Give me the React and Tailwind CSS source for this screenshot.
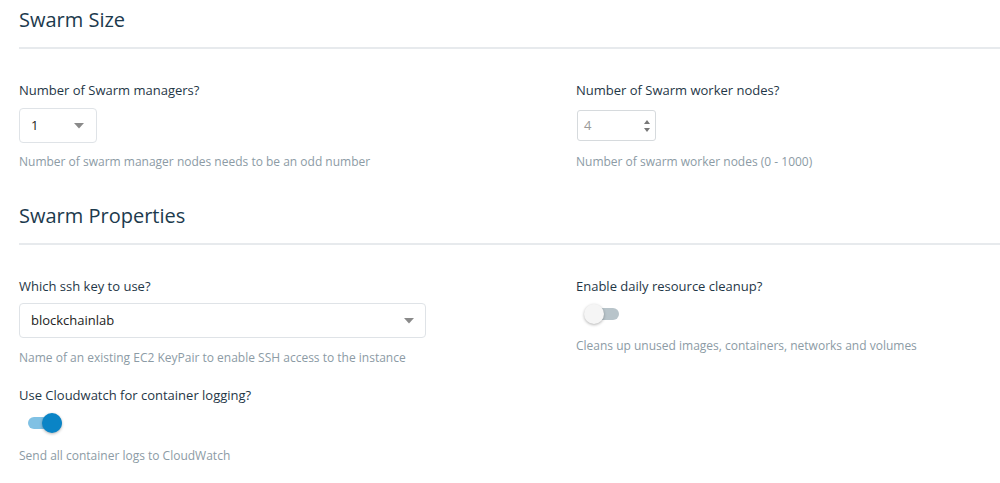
import React from "react";

const font = { fontFamily: '"Open Sans", "Liberation Sans", sans-serif' };

const Caret = () => (
  <svg width="10" height="6" viewBox="0 0 10 6" className="shrink-0">
    <path d="M0 0 H10 L5 5.5 Z" fill="#8a8a8a" />
  </svg>
);

const Toggle = ({ on }) => (
  <div className="relative ml-[8px] h-[20px] w-[35px]">
    <div
      className={`absolute left-[1px] top-[4px] h-[12px] w-[34px] rounded-full ${
        on ? "bg-[#80c1e4]" : "bg-[#b8c4ca]"
      }`}
    />
    <div
      className={`absolute top-0 h-[20px] w-[20px] rounded-full shadow-[0_1px_3px_rgba(0,0,0,0.3)] ${
        on ? "left-[15px] bg-[#0a84c6]" : "left-0 bg-[#f5f5f5]"
      }`}
    />
  </div>
);

const Heading = ({ children }) => (
  <div>
    <h2 className="pl-[19px] text-[20px] leading-[28px] text-[#1c3a4d]">
      {children}
    </h2>
    <div className="ml-[19px] mt-[13px] h-[2px] bg-[#e7eaed]" />
  </div>
);

const Label = ({ children }) => (
  <div className="text-[13px] leading-[20px] text-[#1f3747]">{children}</div>
);

const Help = ({ children, className = "" }) => (
  <div className={`text-[12px] leading-[18px] text-[#8c9ba5] ${className}`}>
    {children}
  </div>
);

export default function App() {
  return (
    <div className="min-h-[483px] w-[1000px] overflow-hidden bg-white pt-[6px]" style={font}>
      <Heading>Swarm Size</Heading>

      <div className="grid grid-cols-[557px_1fr] pl-[19px] pt-[31px]">
        <div>
          <Label>Number of Swarm managers?</Label>
          <div className="mt-[8px] flex h-[35px] w-[78px] items-center justify-between rounded-[4px] border border-[#dfe3e7] pl-[11px] pr-[12px] text-[13px] text-[#222]">
            <span>1</span>
            <Caret />
          </div>
          <Help className="mt-[10px]">
            Number of swarm manager nodes needs to be an odd number
          </Help>
        </div>
        <div>
          <Label>Number of Swarm worker nodes?</Label>
          <div className="ml-[1px] mt-[10px] flex h-[31px] w-[79px] items-center justify-between rounded-[3px] border border-[#d6dadd] pl-[6px] pr-[5px] text-[13px] text-[#9a9a9a]">
            <span>4</span>
            <div className="flex flex-col gap-[4px]">
              <svg width="6" height="4" viewBox="0 0 6 4">
                <path d="M0 4 L3 0 L6 4 Z" fill="#777" />
              </svg>
              <svg width="6" height="4" viewBox="0 0 6 4">
                <path d="M0 0 L6 0 L3 4 Z" fill="#777" />
              </svg>
            </div>
          </div>
          <Help className="mt-[12px]">Number of swarm worker nodes (0 - 1000)</Help>
        </div>
      </div>

      <div className="pt-[31px]">
        <Heading>Swarm Properties</Heading>
      </div>

      <div className="grid grid-cols-[557px_1fr] pl-[19px] pt-[31px]">
        <div>
          <Label>Which ssh key to use?</Label>
          <div className="mt-[7px] flex h-[35px] w-[407px] items-center justify-between rounded-[4px] border border-[#dfe3e7] pl-[11px] pr-[11px] text-[13px] text-[#222]">
            <span>blockchainlab</span>
            <Caret />
          </div>
          <Help className="mt-[11px]">
            Name of an existing EC2 KeyPair to enable SSH access to the instance
          </Help>
          <div className="mt-[18px]">
            <Label>Use Cloudwatch for container logging?</Label>
          </div>
          <div className="mt-[8px]">
            <Toggle on />
          </div>
          <Help className="mt-[14px]">Send all container logs to CloudWatch</Help>
        </div>
        <div>
          <Label>Enable daily resource cleanup?</Label>
          <div className="mt-[8px]">
            <Toggle />
          </div>
          <Help className="mt-[13px]">
            Cleans up unused images, containers, networks and volumes
          </Help>
        </div>
      </div>
    </div>
  );
}
